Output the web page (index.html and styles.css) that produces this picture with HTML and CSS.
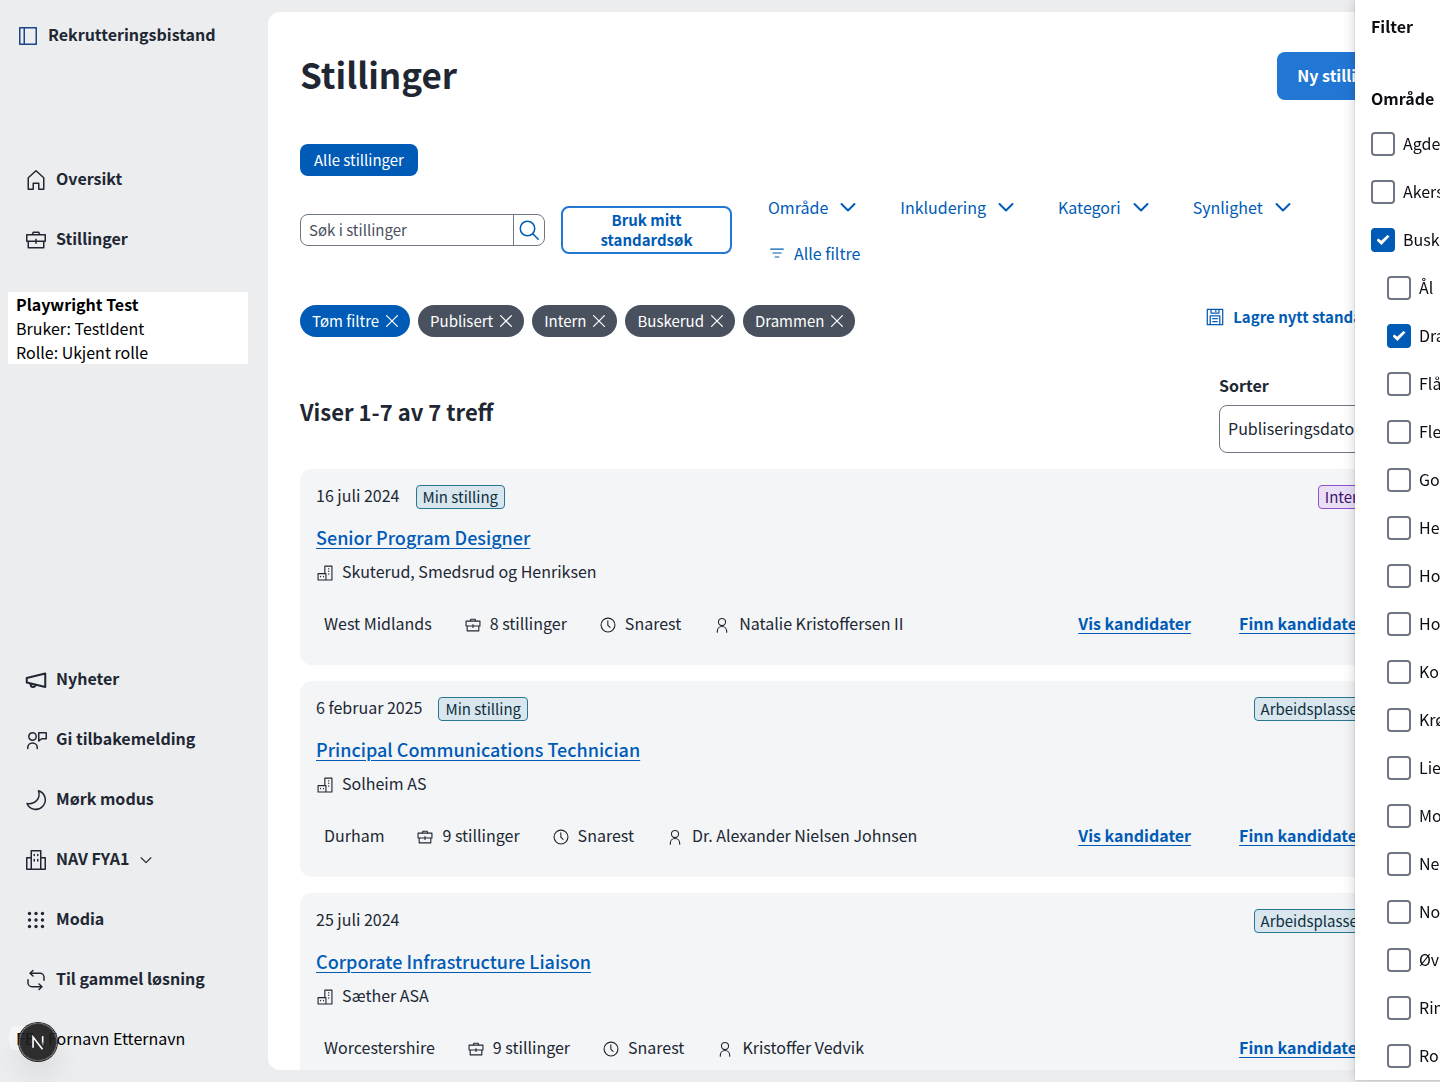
FILE: index.html
```html
<!DOCTYPE html>
<html lang="no">
<head>
<meta charset="utf-8">
<title>Rekrutteringsbistand</title>
<link rel="stylesheet" href="styles.css">
</head>
<body>
<svg class="sprite" aria-hidden="true">
  <symbol id="i-panel" viewBox="0 0 24 24"><path d="M3.750 3.750h16.500v16.500H3.750zM8.250 3.750v16.500"/></symbol>
  <symbol id="i-house" viewBox="0 0 24 24"><path d="M4.250 9.750 12 2.750l7.750 7v11.500h-5v-6h-5.500v6h-5z"/></symbol>
  <symbol id="i-case" viewBox="0 0 24 24"><path d="M2.750 6.750h18.500v6.500H2.750zM4.250 13.250v6.500h15.500v-6.500M8.250 6.750l1-2.500h5.500l1 2.500M12 11.250v4"/></symbol>
  <symbol id="i-horn" viewBox="0 0 24 24"><path d="M2.750 10 21.250 5.500v13.500l-18.500-4.500zM6.500 15.500c0 2.250 1 3.500 2.500 3.500s2.250-1 2.250-2.250"/></symbol>
  <symbol id="i-talk" viewBox="0 0 24 24"><circle cx="8.500" cy="8.500" r="3.750"/><path d="M3.750 20.500v-.750a4.750 4.750 0 0 1 9.500 0v.750M14.750 4.750h7.500v6h-4.500l-3 2.250z"/></symbol>
  <symbol id="i-moon" viewBox="0 0 24 24"><path d="M14.500 2.750a9.500 9.500 0 1 1-11.500 12.750C11 17 17 10.500 14.500 2.750z"/></symbol>
  <symbol id="i-office" viewBox="0 0 24 24"><path d="M7.250 21.250V2.750h9.500v18.500M7.250 9.750h-4.500v11.500h18.500V9.750h-4.500"/><path d="M10.250 6.500v1m3.500-1v1m-3.500 4v1.500m3.500-1.500v1.500"/></symbol>
  <symbol id="i-grid" viewBox="0 0 24 24"><g class="solid"><circle cx="5.500" cy="5.500" r="1.700"/><circle cx="12" cy="5.500" r="1.700"/><circle cx="18.500" cy="5.500" r="1.700"/><circle cx="5.500" cy="12" r="1.700"/><circle cx="12" cy="12" r="1.700"/><circle cx="18.500" cy="12" r="1.700"/><circle cx="5.500" cy="18.500" r="1.700"/><circle cx="12" cy="18.500" r="1.700"/><circle cx="18.500" cy="18.500" r="1.700"/></g></symbol>
  <symbol id="i-swap" viewBox="0 0 24 24"><path d="M9 2.500 6 5.250 9 8M6.250 5.250H16a4 4 0 0 1 4 4v3M15 16l3 2.750-3 2.750M17.750 18.750H8a4 4 0 0 1-4-4v-3"/></symbol>
  <symbol id="i-down" viewBox="0 0 24 24"><path d="m5.500 9 6.500 6.500L18.500 9"/></symbol>
  <symbol id="i-search" viewBox="0 0 24 24"><circle cx="10.500" cy="10.500" r="7.250"/><path d="m16 16 5.250 5.250"/></symbol>
  <symbol id="i-filter" viewBox="0 0 24 24"><path d="M3.500 6.750h17M6.500 12h11M9.500 17.250h5"/></symbol>
  <symbol id="i-x" viewBox="0 0 24 24"><path d="m5.500 5.500 13 13m0-13-13 13"/></symbol>
  <symbol id="i-save" viewBox="0 0 24 24"><path d="M2.750 2.750h18.500v18.500H2.750zM7.250 2.750v4.500h9.500v-4.500M6.250 21.250v-10.500h11.500v10.500M9.250 14h5.500m-5.500 3.500h5.500M13 4v1.500"/></symbol>
  <symbol id="i-firm" viewBox="0 0 24 24"><path d="M11.750 12.750v-10h9.500v18.500H2.750v-8.500h10.500v8.500M17 6v.5M17 9.500v.5M17 13v.5M6 16.500v.5M10 16.500v.5"/></symbol>
  <symbol id="i-clock" viewBox="0 0 24 24"><circle cx="12" cy="12" r="9.250"/><path d="M11.750 6.500v5.750l3 3"/></symbol>
  <symbol id="i-person" viewBox="0 0 24 24"><circle cx="12" cy="8" r="4.750"/><path d="M5.750 21.500v-1.250a6.250 6.250 0 0 1 12.500 0v1.250"/></symbol>
</svg>

<div class="app">
  <aside class="sidebar">
    <div class="brand"><svg class="icon i24 navy"><use href="#i-panel"/></svg>Rekrutteringsbistand</div>
    <nav class="nav">
      <a href="#"><svg class="icon i24"><use href="#i-house"/></svg>Oversikt</a>
      <a href="#"><svg class="icon i24"><use href="#i-case"/></svg>Stillinger</a>
    </nav>
    <div class="identity"><strong>Playwright Test</strong><span>Bruker: TestIdent</span><span>Rolle: Ukjent rolle</span></div>
    <nav class="nav nav-bottom">
      <a href="#"><svg class="icon i24 heavy"><use href="#i-horn"/></svg>Nyheter</a>
      <a href="#"><svg class="icon i24"><use href="#i-talk"/></svg>Gi tilbakemelding</a>
      <button type="button"><svg class="icon i24"><use href="#i-moon"/></svg>Mørk modus</button>
      <button type="button"><svg class="icon i24"><use href="#i-office"/></svg>NAV FYA1<svg class="icon i18"><use href="#i-down"/></svg></button>
      <button type="button"><svg class="icon i24"><use href="#i-grid"/></svg>Modia</button>
      <a href="#"><svg class="icon i24"><use href="#i-swap"/></svg>Til gammel løsning</a>
    </nav>
    <div class="user"><span class="initials">FE</span><span>Fornavn Etternavn</span></div>
  </aside>

  <main class="main">
    <header class="head"><h1>Stillinger</h1><button class="primary" type="button">Ny stilling</button></header>
    <button class="tab" type="button">Alle stillinger</button>
    <div class="toolbar">
      <form class="search" role="search"><input type="text" aria-label="Søk i stillinger" placeholder="Søk i stillinger"><button type="button" aria-label="Søk"><svg class="icon i24"><use href="#i-search"/></svg></button></form>
      <button class="standard" type="button">Bruk mitt standardsøk</button>
      <div class="filters">
        <button type="button">Område<svg class="icon i24 heavy"><use href="#i-down"/></svg></button>
        <button type="button">Inkludering<svg class="icon i24 heavy"><use href="#i-down"/></svg></button>
        <button type="button">Kategori<svg class="icon i24 heavy"><use href="#i-down"/></svg></button>
        <button type="button">Synlighet<svg class="icon i24 heavy"><use href="#i-down"/></svg></button>
        <button type="button"><svg class="icon i18"><use href="#i-filter"/></svg>Alle filtre</button>
      </div>
    </div>
    <div class="active">
      <div class="chips">
        <button class="chip clear" type="button">Tøm filtre<svg class="icon i20"><use href="#i-x"/></svg></button>
        <button class="chip" type="button">Publisert<svg class="icon i20"><use href="#i-x"/></svg></button>
        <button class="chip" type="button">Intern<svg class="icon i20"><use href="#i-x"/></svg></button>
        <button class="chip" type="button">Buskerud<svg class="icon i20"><use href="#i-x"/></svg></button>
        <button class="chip" type="button">Drammen<svg class="icon i20"><use href="#i-x"/></svg></button>
      </div>
      <button class="save" type="button"><svg class="icon i20"><use href="#i-save"/></svg>Lagre nytt standardsøk</button>
    </div>
    <div class="result-head">
      <h2>Viser 1-7 av 7 treff</h2>
      <div class="sort"><label for="sort">Sorter</label><select id="sort"><option>Publiseringsdato</option></select></div>
    </div>
    <div class="cards">
      <article class="card">
        <div class="card-top"><span>16 juli 2024</span><span class="tag">Min stilling</span><span class="tag purple end">Intern</span></div>
        <h3><a href="#">Senior Program Designer</a></h3>
        <div class="firm"><svg class="icon i18"><use href="#i-firm"/></svg>Skuterud, Smedsrud og Henriksen</div>
        <div class="info"><span>West Midlands</span><span><svg class="icon i18"><use href="#i-case"/></svg>8 stillinger</span><span><svg class="icon i18"><use href="#i-clock"/></svg>Snarest</span><span><svg class="icon i18"><use href="#i-person"/></svg>Natalie Kristoffersen II</span>
          <div class="links"><a href="#">Vis kandidater</a><a href="#">Finn kandidater</a></div></div>
      </article>
      <article class="card">
        <div class="card-top"><span>6 februar 2025</span><span class="tag">Min stilling</span><span class="tag end">Arbeidsplassen</span></div>
        <h3><a href="#">Principal Communications Technician</a></h3>
        <div class="firm"><svg class="icon i18"><use href="#i-firm"/></svg>Solheim AS</div>
        <div class="info"><span>Durham</span><span><svg class="icon i18"><use href="#i-case"/></svg>9 stillinger</span><span><svg class="icon i18"><use href="#i-clock"/></svg>Snarest</span><span><svg class="icon i18"><use href="#i-person"/></svg>Dr. Alexander Nielsen Johnsen</span>
          <div class="links"><a href="#">Vis kandidater</a><a href="#">Finn kandidater</a></div></div>
      </article>
      <article class="card">
        <div class="card-top"><span>25 juli 2024</span><span class="tag end">Arbeidsplassen</span></div>
        <h3><a href="#">Corporate Infrastructure Liaison</a></h3>
        <div class="firm"><svg class="icon i18"><use href="#i-firm"/></svg>Sæther ASA</div>
        <div class="info"><span>Worcestershire</span><span><svg class="icon i18"><use href="#i-case"/></svg>9 stillinger</span><span><svg class="icon i18"><use href="#i-clock"/></svg>Snarest</span><span><svg class="icon i18"><use href="#i-person"/></svg>Kristoffer Vedvik</span>
          <div class="links"><a href="#">Finn kandidater</a></div></div>
      </article>
    </div>
  </main>
</div>

<section class="drawer" aria-label="Filter">
  <h2>Filter</h2>
  <fieldset>
    <legend>Område</legend>
    <label><input type="checkbox">Agder</label>
    <label><input type="checkbox">Akershus</label>
    <label><input type="checkbox" checked>Buskerud</label>
    <div class="sub">
      <label><input type="checkbox">Ål</label>
      <label><input type="checkbox" checked>Drammen</label>
      <label><input type="checkbox">Flå</label>
      <label><input type="checkbox">Flesberg</label>
      <label><input type="checkbox">Gol</label>
      <label><input type="checkbox">Hemsedal</label>
      <label><input type="checkbox">Hol</label>
      <label><input type="checkbox">Hole</label>
      <label><input type="checkbox">Kongsberg</label>
      <label><input type="checkbox">Krødsherad</label>
      <label><input type="checkbox">Lier</label>
      <label><input type="checkbox">Modum</label>
      <label><input type="checkbox">Nesbyen</label>
      <label><input type="checkbox">Nore og Uvdal</label>
      <label><input type="checkbox">Øvre Eiker</label>
      <label><input type="checkbox">Ringerike</label>
      <label><input type="checkbox">Rollag</label>
    </div>
  </fieldset>
</section>

<button class="devtools" type="button" aria-label="Open Next.js Dev Tools">
  <svg viewBox="0 0 40 40"><defs><linearGradient id="fade" x1="0" y1="0" x2="0" y2="1"><stop offset=".5" stop-color="#fff"/><stop offset="1" stop-color="#fff" stop-opacity="0"/></linearGradient></defs><path d="M14.500 26.500V14.500L25 28" fill="none" stroke="#fff" stroke-width="1.800"/><path d="M24.300 13.500h1.800v11h-1.800z" fill="url(#fade)"/></svg>
</button>
</body>
</html>
```
FILE: styles.css
```css
* { box-sizing: border-box; }
body {
  margin: 0;
  height: 100vh;
  overflow: hidden;
  background: #ecedef;
  color: #202733;
  font: 16px/24px "Noto Sans CJK SC", "Noto Sans", sans-serif;
}
button, input, select { font: inherit; color: inherit; }
button { border: 0; background: none; padding: 0; cursor: pointer; }
h1, h2, h3 { margin: 0; }
a { color: #005bb6; }

.sprite { display: none; }
.icon { flex: none; fill: none; stroke: currentColor; stroke-width: 1.5; stroke-linejoin: round; stroke-linecap: round; }
.icon.heavy { stroke-width: 2; }
.i18 { width: 18px; height: 18px; }
.i20 { width: 20px; height: 20px; }
.i24 { width: 24px; height: 24px; }
.navy { color: #1c4587; }
.solid { fill: currentColor; stroke: none; }

.app { display: flex; height: 100vh; }

/* Sidebar */
.sidebar { width: 268px; flex: none; display: flex; flex-direction: column; padding: 16px 20px 24px 8px; }
.brand { display: flex; align-items: center; gap: 8px; height: 40px; padding: 0 8px 4px; font-weight: 600; }
.nav { display: flex; flex-direction: column; gap: 12px; margin-top: 100px; }
.nav a, .nav button { display: flex; align-items: center; gap: 8px; height: 48px; padding: 0 16px 4px; color: inherit; font-weight: 600; text-decoration: none; }
.sidebar .icon { margin-top: 4px; }
.identity { display: flex; flex-direction: column; margin-top: 28px; padding: 0 8px; background: #fff; color: #000; }
.nav-bottom { margin-top: auto; }
.user { display: flex; align-items: center; height: 40px; margin-top: 14px; color: #000; }
.initials { width: 40px; padding-left: 8px; background: radial-gradient(circle at 18px 12px, #f5f6f7 17px, transparent 18px); }

/* Content */
.main { flex: 1; min-width: 0; margin: 12px 12px 12px 0; padding: 40px 32px 0; overflow: hidden; border-radius: 12px; background: #fff; }
.head { display: flex; justify-content: space-between; align-items: center; height: 48px; }
h1 { font-size: 35px; line-height: 44px; padding-bottom: 4px; font-weight: 600; }
.primary { height: 48px; padding: 0 20px 2px; border-radius: 8px; background: #2277d5; color: #fff; font-weight: 600; }
.tab { height: 32px; margin-top: 44px; padding: 0 14px; border-radius: 8px; background: #005bb6; color: #fff; font-size: 15px; }
.toolbar { display: flex; align-items: center; gap: 16px; margin-top: 8px; }
.search { display: flex; width: 245px; flex: none; height: 32px; border: 1px solid #6f7785; border-radius: 8px; }
.search input { flex: 1; min-width: 0; padding: 0 8px; border: 0; background: none; font-size: 15px; }
.search input::placeholder { color: #49515e; opacity: 1; }
.search button { width: 31px; display: grid; place-items: center; border-left: 1px solid #6f7785; color: #005bb6; }
.standard { width: 171px; flex: none; height: 48px; padding: 0 20px; border: 2px solid #2277d5; border-radius: 8px; color: #005bb6; font-size: 15px; line-height: 20px; font-weight: 600; }
.filters { display: flex; flex-wrap: wrap; color: #005bb6; }
.filters button { display: flex; align-items: center; gap: 8px; height: 46px; padding: 0 20px; }
.active { display: flex; justify-content: space-between; align-items: flex-end; height: 40px; margin-top: 21px; }
.chips { display: flex; gap: 8px; }
.chip { display: flex; align-items: center; gap: 3px; height: 32px; padding: 0 8px 0 12px; border-radius: 16px; background: #49515e; color: #fff; font-size: 15px; }
.chip.clear { background: #005bb6; }
.save { display: flex; align-items: center; gap: 8px; height: 40px; margin-right: -8px; color: #005bb6; font-size: 15px; font-weight: 600; }
.result-head { display: flex; justify-content: space-between; align-items: center; height: 80px; margin: 36px 0 16px; }
.result-head h2 { font-size: 22px; line-height: 32px; padding-bottom: 4px; font-weight: 600; }
.sort { display: flex; flex-direction: column; gap: 8px; width: 177px; }
.sort label { font-weight: 600; }
.sort select { height: 48px; padding: 0 8px 2px; border: 1px solid #6f7785; border-radius: 8px; background: #fff; appearance: none; }

.cards { display: flex; flex-direction: column; gap: 16px; }
.card { padding: 16px; border-radius: 12px; background: #f4f5f7; }
.card-top { display: flex; align-items: center; gap: 16px; padding-right: 6px; }
.card-top > span:first-child { line-height: 20px; padding-bottom: 4px; }
.tag { height: 24px; padding: 0 6px; border: 1px solid #287694; border-radius: 4px; background: #d9e6ee; color: #0e2f40; font-size: 15px; line-height: 22px; }
.tag.purple { border-color: #8f4fd0; background: #e9e0f5; color: #3f1070; }
.tag.end { margin-left: auto; }
.card h3 { margin-top: 14px; font-size: 18px; line-height: 28px; font-weight: 500; }
.firm { display: flex; align-items: center; gap: 8px; margin-top: 8px; }
.info { display: flex; align-items: center; gap: 32px; height: 48px; margin-top: 16px; padding: 0 16px 0 8px; }
.card .icon { margin-top: 4px; }
.info > span { display: flex; align-items: center; gap: 8px; }
.card { padding-bottom: 18px; }
.links { display: flex; gap: 48px; margin-left: auto; font-weight: 600; }
a { text-decoration-thickness: 1px; text-underline-offset: 3px; }

/* Filter drawer, sliding in over the right edge */
.drawer { position: fixed; top: 0; right: -315px; bottom: 2px; width: 400px; padding: 14px 16px; overflow: hidden; background: #fff; color: #0b0d12; box-shadow: 0 0 12px rgb(0 0 0 / 18%), 0 0 2px rgb(0 0 0 / 20%); }
.drawer h2 { font-size: 16px; line-height: 24px; font-weight: 600; }
.drawer fieldset { margin: 48px 0 0; padding: 0; border: 0; }
.drawer legend { padding: 0; margin-bottom: 10px; font-weight: 600; }
.drawer label { display: flex; align-items: center; gap: 8px; height: 48px; padding-bottom: 2px; }
.drawer input { appearance: none; width: 24px; height: 24px; margin: 2px 0 0; display: grid; place-items: center; border: 2px solid #6f7785; border-radius: 4px; }
.drawer input:checked { border-color: #005bb6; background: #005bb6; }
.drawer input:checked::before { content: ""; width: 13px; height: 10px; background: #fff; clip-path: polygon(0 52%, 14% 36%, 36% 58%, 84% 0, 100% 16%, 38% 100%); }
.sub { padding-left: 16px; }

.devtools { position: fixed; left: 19px; bottom: 21px; width: 38px; height: 38px; border: 1px solid #555; border-radius: 50%; background: rgb(28 28 28 / 92%); box-shadow: 0 0 0 1px #222, 0 16px 32px -8px rgb(0 0 0 / 24%); }
.devtools svg { display: block; width: 36px; height: 36px; }
```
